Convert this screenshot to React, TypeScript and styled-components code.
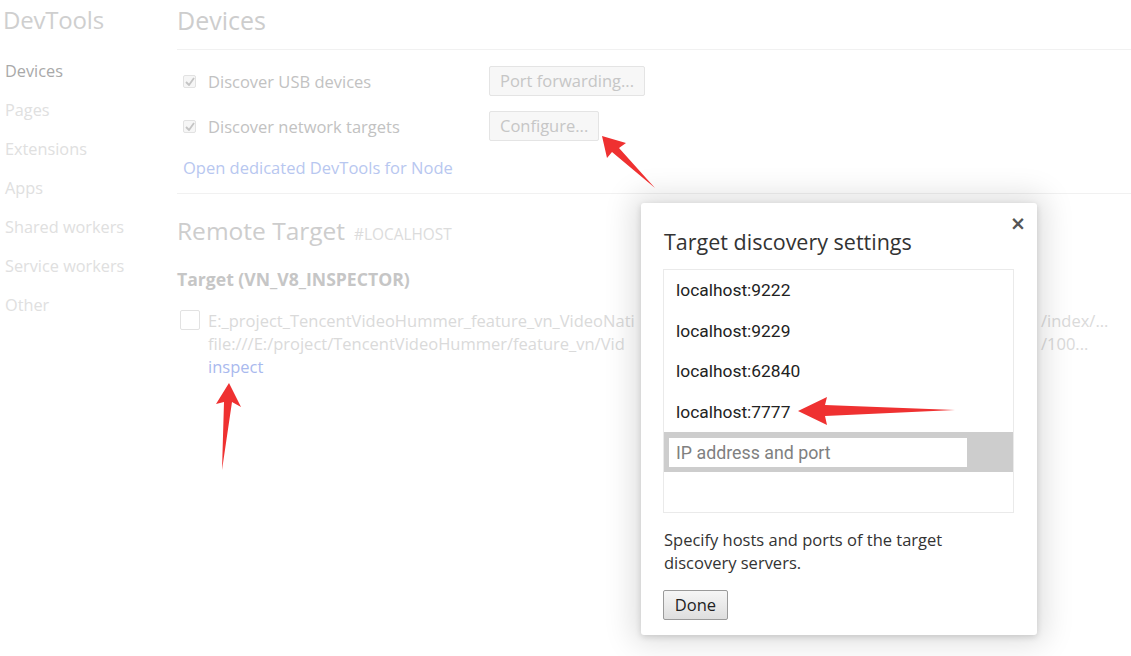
import React from "react";
import styled, { createGlobalStyle } from "styled-components";

const Global = createGlobalStyle`
  html, body { margin: 0; padding: 0; background: #fff; }
  body { font-family: "Open Sans", "Noto Sans", sans-serif; overflow: hidden; }
  #root { width: 1131px; height: 656px; position: relative; }
`;

const Page = styled.div`
  display: flex;
  width: 1131px;
  height: 656px;
  position: relative;
  overflow: hidden;
  background: #fff;
`;

const Sidebar = styled.div`
  width: 177px;
  flex-shrink: 0;
  display: flex;
  flex-direction: column;
  padding-left: 3px;
  box-sizing: border-box;
`;

const AppTitle = styled.div`
  font-size: 24px;
  line-height: 40px;
  height: 40px;
  color: #cfcfcf;
  letter-spacing: -0.2px;
`;

const Nav = styled.div`
  display: flex;
  flex-direction: column;
  padding-top: 12px;
  padding-left: 2px;
`;

const NavItem = styled.div<{ $active?: boolean }>`
  height: 39px;
  line-height: 39px;
  font-size: 16.3px;
  color: ${(p) => (p.$active ? "#a9a9a9" : "#e0e0e0")};
`;

const Main = styled.div`
  flex: 1;
  display: flex;
  flex-direction: column;
  min-width: 0;
`;

const PageHeader = styled.div`
  height: 50px;
  border-bottom: 1px solid #f1f1f1;
  font-size: 25px;
  line-height: 40px;
  color: #cdcdcd;
  box-sizing: border-box;
`;

const Section = styled.div`
  padding: 16px 0 0 6px;
  height: 144px;
  box-sizing: border-box;
  border-bottom: 1px solid #f1f1f1;
  display: flex;
  flex-direction: column;
`;

const CheckRow = styled.div`
  display: flex;
  align-items: center;
  height: 30px;
  margin-bottom: 15px;
`;

const CheckLabel = styled.div`
  width: 306px;
  display: flex;
  align-items: center;
  gap: 12px;
  font-size: 16.5px;
  color: #c2c2c2;
`;

const Box = styled.span<{ $size?: number; $white?: boolean }>`
  width: ${(p) => p.$size ?? 13}px;
  height: ${(p) => p.$size ?? 13}px;
  border: 1px solid #e2e2e2;
  border-radius: 2px;
  background: ${(p) => (p.$white ? "#fff" : "#f6f6f6")};
  display: inline-flex;
  align-items: center;
  justify-content: center;
  box-sizing: border-box;
  flex-shrink: 0;
`;

const Button = styled.div`
  height: 30px;
  padding: 0 10px;
  border: 1px solid #e4e4e4;
  border-radius: 2px;
  background: #f7f7f7;
  font-size: 16.5px;
  line-height: 28px;
  color: #c6c6c6;
  box-sizing: border-box;
`;

const Link = styled.div`
  font-size: 16.5px;
  color: #b8c7f0;
  line-height: 20px;
  margin-top: 2px;
`;

const RemoteHeader = styled.div`
  display: flex;
  align-items: baseline;
  gap: 9px;
  padding-top: 20px;
  height: 36px;
  font-size: 24.5px;
  color: #cdcdcd;
`;

const HashTag = styled.span`
  font-size: 15.4px;
  color: #dcdcdc;
`;

const TargetHeading = styled.div`
  font-size: 17.6px;
  font-weight: 700;
  color: #c6c6c6;
  margin-top: 17px;
  line-height: 24px;
`;

const TargetItem = styled.div`
  display: flex;
  gap: 8px;
  margin-top: 18px;
  padding-left: 3px;
`;

const Lines = styled.div`
  display: flex;
  flex-direction: column;
  flex: 1;
  min-width: 0;
  font-size: 16.5px;
  line-height: 23px;
  color: #dadada;
`;

const LineRow = styled.div`
  display: grid;
  grid-template-columns: 833px 1fr;
  white-space: nowrap;
`;

const Inspect = styled.div`
  color: #a9b9ee;
`;

const Dialog = styled.div`
  position: absolute;
  left: 641px;
  top: 203px;
  width: 396px;
  height: 432px;
  background: #fff;
  border-radius: 3px;
  box-shadow: 0 0 30px 8px rgba(0, 0, 0, 0.13), 0 2px 6px rgba(0, 0, 0, 0.15);
  padding: 21px 23px 0 22px;
  box-sizing: border-box;
  display: flex;
  flex-direction: column;
`;

const Close = styled.div`
  position: absolute;
  right: 11px;
  top: 9px;
  font-size: 19px;
  font-weight: 700;
  color: #555;
  font-family: "DejaVu Sans", sans-serif;
`;

const DialogTitle = styled.div`
  font-size: 21.5px;
  color: #333;
  line-height: 36px;
  height: 45px;
  padding-left: 1px;
`;

const ListBox = styled.div`
  border: 1px solid #eaeaea;
  height: 244px;
  box-sizing: border-box;
  display: flex;
  flex-direction: column;
`;

const ListItem = styled.div`
  height: 40.5px;
  line-height: 40px;
  padding-left: 12px;
  font-family: Roboto, "Liberation Sans", sans-serif;
  font-size: 17.4px;
  color: #222;
  flex-shrink: 0;
`;

const InputBand = styled.div`
  background: #cdcdcd;
  height: 40px;
  display: flex;
  align-items: center;
  padding-left: 5px;
  flex-shrink: 0;
`;

const Input = styled.div`
  width: 298px;
  height: 29px;
  background: #fff;
  line-height: 29px;
  padding-left: 7px;
  box-sizing: border-box;
  font-family: Roboto, "Liberation Sans", sans-serif;
  font-size: 17.8px;
  color: #808080;
`;

const Hint = styled.div`
  font-size: 16.5px;
  line-height: 23px;
  color: #333;
  margin-top: 15px;
  padding-left: 1px;
`;

const DoneButton = styled.div`
  margin-top: 16px;
  width: 65px;
  height: 30px;
  box-sizing: border-box;
  border: 1px solid #9a9a9a;
  border-radius: 2px;
  background: linear-gradient(#f6f6f6, #dedede);
  font-size: 16.5px;
  line-height: 28px;
  text-align: center;
  color: #222;
`;

const Arrows = styled.svg`
  position: absolute;
  left: 0;
  top: 0;
  pointer-events: none;
`;

const Check = () => (
  <svg width="10" height="9" viewBox="0 0 10 9">
    <path d="M1 5 L4 8 L9 1" fill="none" stroke="#c4c4c4" strokeWidth="1.8" />
  </svg>
);

export default function App() {
  return (
    <>
      <Global />
      <Page>
        <Sidebar>
          <AppTitle>DevTools</AppTitle>
          <Nav>
            <NavItem $active>Devices</NavItem>
            <NavItem>Pages</NavItem>
            <NavItem>Extensions</NavItem>
            <NavItem>Apps</NavItem>
            <NavItem>Shared workers</NavItem>
            <NavItem>Service workers</NavItem>
            <NavItem>Other</NavItem>
          </Nav>
        </Sidebar>
        <Main>
          <PageHeader>Devices</PageHeader>
          <Section>
            <CheckRow>
              <CheckLabel>
                <Box>
                  <Check />
                </Box>
                Discover USB devices
              </CheckLabel>
              <Button>Port forwarding...</Button>
            </CheckRow>
            <CheckRow>
              <CheckLabel>
                <Box>
                  <Check />
                </Box>
                Discover network targets
              </CheckLabel>
              <Button>Configure...</Button>
            </CheckRow>
            <Link>Open dedicated DevTools for Node</Link>
          </Section>
          <RemoteHeader>
            Remote Target <HashTag>#LOCALHOST</HashTag>
          </RemoteHeader>
          <TargetHeading>Target (VN_V8_INSPECTOR)</TargetHeading>
          <TargetItem>
            <Box $size={20} $white style={{ marginTop: 1 }} />
            <Lines>
              <LineRow>
                <span>E:_project_TencentVideoHummer_feature_vn_VideoNati</span>
                <span>/index/...</span>
              </LineRow>
              <LineRow>
                <span>file:///E:/project/TencentVideoHummer/feature_vn/Vid</span>
                <span>/100...</span>
              </LineRow>
              <Inspect>inspect</Inspect>
            </Lines>
          </TargetItem>
        </Main>

        <Dialog>
          <Close>×</Close>
          <DialogTitle>Target discovery settings</DialogTitle>
          <ListBox>
            <ListItem>localhost:9222</ListItem>
            <ListItem>localhost:9229</ListItem>
            <ListItem>localhost:62840</ListItem>
            <ListItem>localhost:7777</ListItem>
            <InputBand>
              <Input>IP address and port</Input>
            </InputBand>
          </ListBox>
          <Hint>
            Specify hosts and ports of the target
            <br />
            discovery servers.
          </Hint>
          <DoneButton>Done</DoneButton>
        </Dialog>

        <Arrows width="1131" height="656" viewBox="0 0 1131 656">
          <polygon
            points="602,136 626,143 619,148 655,188 612,152 607,158"
            fill="#ef3131"
          />
          <polygon
            points="229,383 241,407 232,402 222,470 224,402 216,404"
            fill="#ef3131"
          />
          <polygon
            points="798,411 827,397 825,405 955,410 825,416 827,425"
            fill="#ef3131"
          />
        </Arrows>
      </Page>
    </>
  );
}
